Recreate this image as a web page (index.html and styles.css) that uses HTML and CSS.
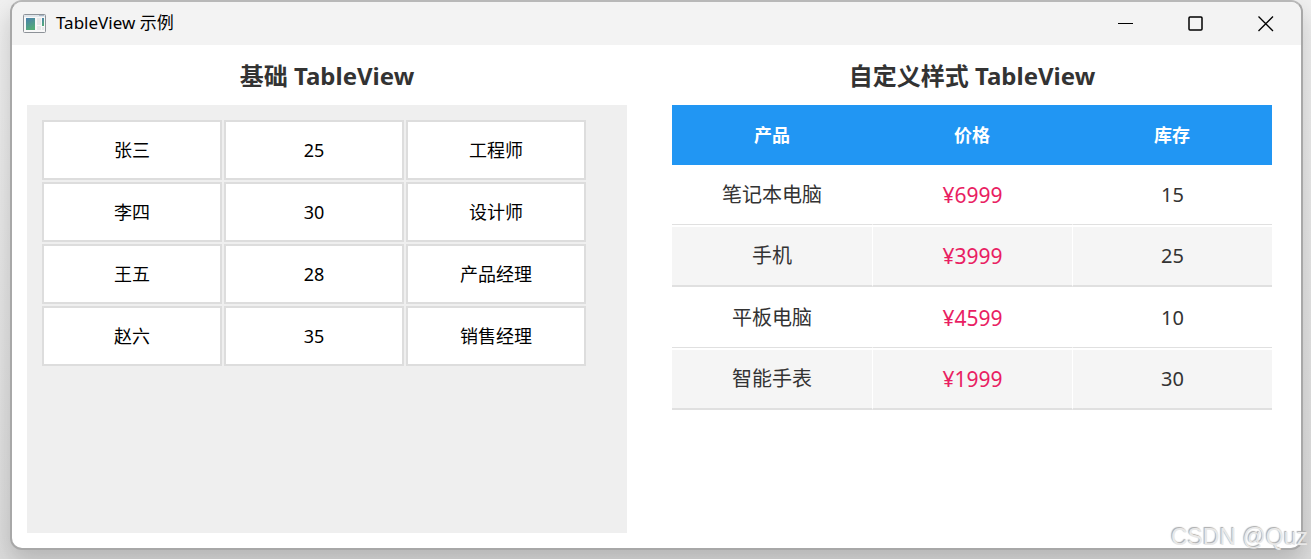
FILE: index.html
```html
<!DOCTYPE html>
<html lang="zh-CN">
<head>
    <meta charset="UTF-8">
    <title>TableView 示例</title>
    <link rel="stylesheet" href="styles.css">
</head>
<body>
    <div class="window">
        <header class="titlebar">
            <svg class="app-icon" width="24" height="20" viewBox="0 0 24 20">
                <defs>
                    <linearGradient id="screen" x1="0" y1="0" x2="0.4" y2="1">
                        <stop offset="0" stop-color="#4a7fae"/>
                        <stop offset="1" stop-color="#52ab78"/>
                    </linearGradient>
                </defs>
                <rect x="0.5" y="0.5" width="22" height="18" rx="1" fill="#f8f8f8" stroke="#8d9298"/>
                <rect x="1" y="1" width="21" height="2" fill="#dfe5ea"/>
                <rect x="16" y="1" width="5" height="1" fill="#a9b7c6"/>
                <rect x="3" y="4" width="9" height="12" fill="url(#screen)"/>
                <rect x="14" y="4" width="4" height="7" fill="#e6e8e8"/>
                <rect x="14" y="12" width="4" height="4" fill="#e6e8e8"/>
                <rect x="19" y="4" width="2" height="8" fill="url(#screen)"/>
                <rect x="19" y="13" width="2" height="3" fill="#e6e8e8"/>
            </svg>
            <span class="title">TableView 示例</span>
            <div class="window-buttons">
                <button type="button" aria-label="最小化">
                    <svg width="16" height="16" viewBox="0 0 16 16"><path d="M0 7.5H15"/></svg>
                </button>
                <button type="button" aria-label="最大化">
                    <svg width="16" height="16" viewBox="0 0 16 16"><rect x="1" y="1" width="13" height="13" rx="1" stroke-width="1.5"/></svg>
                </button>
                <button type="button" aria-label="关闭">
                    <svg width="16" height="16" viewBox="0 0 16 16"><path d="M0.5 0.5L15 15M15 0.5L0.5 15" stroke-width="1.3"/></svg>
                </button>
            </div>
        </header>

        <main class="content">
            <section class="column">
                <h2>基础 TableView</h2>
                <div class="panel">
                    <table class="basic-table">
                        <tr><td>张三</td><td>25</td><td>工程师</td></tr>
                        <tr><td>李四</td><td>30</td><td>设计师</td></tr>
                        <tr><td>王五</td><td>28</td><td>产品经理</td></tr>
                        <tr><td>赵六</td><td>35</td><td>销售经理</td></tr>
                    </table>
                </div>
            </section>

            <section class="column">
                <h2>自定义样式 TableView</h2>
                <table class="styled-table">
                    <thead>
                        <tr><th>产品</th><th>价格</th><th>库存</th></tr>
                    </thead>
                    <tbody>
                        <tr><td>笔记本电脑</td><td class="price">¥6999</td><td>15</td></tr>
                        <tr><td>手机</td><td class="price">¥3999</td><td>25</td></tr>
                        <tr><td>平板电脑</td><td class="price">¥4599</td><td>10</td></tr>
                        <tr><td>智能手表</td><td class="price">¥1999</td><td>30</td></tr>
                    </tbody>
                </table>
            </section>
        </main>
    </div>
    <div class="watermark">CSDN @Quz</div>
</body>
</html>
```

FILE: styles.css
```css
* {
    box-sizing: border-box;
}
body {
    margin: 0;
    padding: 0 8px 9px 10px;
    min-height: 100vh;
    display: flex;
    overflow: hidden;
    background: linear-gradient(#f0f0f0, #dcdcdc);
    font-family: "Noto Sans", "Noto Sans CJK SC", sans-serif;
    color: #333;
}
.window {
    flex: 1;
    display: flex;
    flex-direction: column;
    background: white;
    border: 2px solid #a8a8a8;
    border-top-color: #b8b8b8;
    border-radius: 12px;
    overflow: hidden;
    box-shadow: 0 12px 24px rgba(0,0,0,0.18);
}

/* 标题栏 */
.titlebar {
    display: flex;
    align-items: center;
    height: 43px;
    padding-left: 11px;
    background-color: #f3f3f3;
    color: black;
}
.title {
    margin-left: 9px;
    padding-bottom: 4px;
    font-size: 17px;
}
.window-buttons {
    display: flex;
    margin-left: auto;
}
.window-buttons button {
    display: flex;
    justify-content: center;
    align-items: center;
    width: 70px;
    height: 42px;
    padding: 0;
    border: none;
    background: none;
}
.window-buttons svg {
    fill: none;
    stroke: black;
}

/* 内容 */
.content {
    flex: 1;
    display: flex;
    gap: 45px;
    padding: 15px 29px 15px 15px;
}
.column {
    flex: 1;
    display: flex;
    flex-direction: column;
}
h2 {
    margin: 0 0 13px;
    font-size: 24px;
    line-height: 32px;
    text-align: center;
}
.panel {
    flex: 1;
    padding: 13px;
    background-color: #efefef;
}
td, th {
    padding: 0;
    text-align: center;
    line-height: 28px;
}
.basic-table {
    border-spacing: 2px;
    color: black;
    font-size: 18px;
}
.basic-table td {
    width: 180px;
    height: 60px;
    background: white;
    border: 2px solid #ddd;
}
.styled-table {
    width: 100%;
    table-layout: fixed;
    border-spacing: 0;
    font-size: 20px;
}
.styled-table th {
    height: 60px;
    background-color: #2196f3;
    color: white;
    font-size: 18px;
}
.styled-table td {
    height: 61px;
    background-clip: padding-box;
    border-top: 1px solid transparent;
    border-bottom: 1px solid #e0e0e0;
}
.styled-table tr:first-child td {
    height: 60px;
    border-top: none;
}
.styled-table tr:nth-child(even) td {
    height: 62px;
    background-color: #f5f5f5;
    border-top-width: 2px;
    border-bottom-width: 2px;
}
.styled-table td + td {
    border-left: 1px solid transparent;
}
.styled-table .price {
    color: #e91e63;
    font-size: 21px;
}

.watermark {
    position: absolute;
    right: 3px;
    bottom: 7px;
    color: #e8e8e8;
    font-family: "Liberation Sans", Arial, sans-serif;
    font-size: 23px;
    line-height: 30px;
    text-shadow: -1px -1px 1px #aaa;
}
```
